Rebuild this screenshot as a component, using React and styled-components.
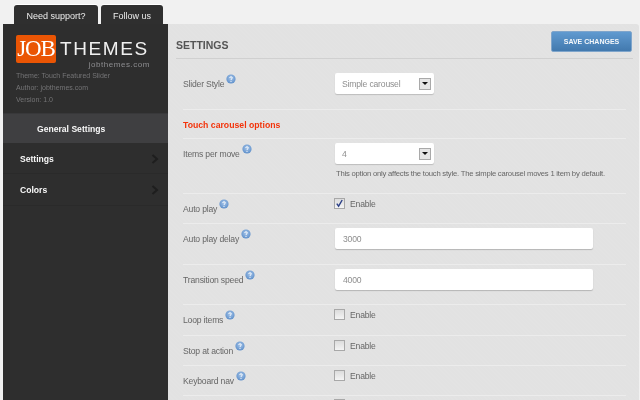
import styled, { createGlobalStyle } from 'styled-components';

const GlobalStyle = createGlobalStyle`
  html, body {
    margin: 0;
    height: 100%;
    overflow: hidden;
    background: #f1f1f1;
    font-family: 'Liberation Sans', Arial, sans-serif;
  }
`;

const Page = styled.div`
  height: 400px;
  padding: 5px 1px 0 3px;
  box-sizing: border-box;
  overflow: hidden;
  filter: blur(0.3px);
`;

const Tabs = styled.div`
  display: flex;
  column-gap: 3px;
  height: 19px;
  margin-left: 11px;
`;

const Tab = styled.div`
  width: ${props => props.$width}px;
  display: flex;
  align-items: center;
  justify-content: center;
  padding-top: 2px;
  box-sizing: border-box;
  background: #2f2f2f;
  border-radius: 3px 3px 0 0;
  box-shadow: 0 -1px 0 #fff;
  color: #ececec;
  font-size: 9px;
`;

const Panel = styled.div`
  display: flex;
  height: 376px;
  background-color: #e2e2e2;
  background-image: repeating-linear-gradient(45deg, rgba(255, 255, 255, 0.035) 0 1px, transparent 1px 3px);
  border-radius: 0 3px 0 0;
`;

const Sidebar = styled.aside`
  width: 165px;
  flex: none;
  background: #2e2e2e;
`;

const Brand = styled.div`
  height: 89px;
  padding: 11px 0 0 13px;
  box-sizing: border-box;
`;

const Logo = styled.div`
  display: flex;
  column-gap: 4px;
  height: 35px;
`;

const LogoBox = styled.div`
  width: 40px;
  height: 28px;
  display: flex;
  align-items: center;
  justify-content: center;
  background: #ea5504;
  border-radius: 2px;
  color: #fff;
  font-family: 'Liberation Serif', serif;
  font-size: 23px;
  letter-spacing: -1.2px;
`;

const LogoWords = styled.div`
  width: 92px;
  text-align: right;
`;

const LogoTitle = styled.div`
  margin-top: 3px;
  color: #f0f0f0;
  font-size: 19px;
  line-height: 22px;
  letter-spacing: 1.6px;
  white-space: nowrap;
  text-align: left;
`;

const LogoSite = styled.div`
  color: #8d8d90;
  font-size: 8px;
  line-height: 9px;
  letter-spacing: 0.55px;
  padding-right: 2px;
`;

const MetaLine = styled.div`
  color: #747476;
  font-size: 7px;
  line-height: 12px;
`;

const NavItem = styled.div`
  height: ${props => props.$height}px;
  display: flex;
  align-items: center;
  justify-content: space-between;
  padding: ${props => (props.$active ? '2px 0 0 34px' : '0 9px 0 17px')};
  box-sizing: border-box;
  background: ${props => (props.$active ? '#3f3f41' : 'transparent')};
  border-top: 1px solid ${props => (props.$active ? '#38383a' : 'transparent')};
  border-bottom: 1px solid ${props => (props.$active ? 'transparent' : '#2a2a2a')};
  color: #f8f8f8;
  font-size: 8.6px;
  font-weight: bold;
`;

const Chevron = () => (
  <svg width='8' height='10' viewBox='0 0 8 10'>
    <path d='M1.5 1 L6 5 L1.5 9' fill='none' stroke='#1e1e1e' strokeWidth='2' />
  </svg>
);

const Content = styled.main`
  flex: 1;
  padding: 7px 6px 0 8px;
  min-width: 0;
`;

const Header = styled.header`
  height: 27px;
  display: flex;
  align-items: flex-start;
  justify-content: space-between;
  padding-right: 1px;
  border-bottom: 1px solid #d0d0d0;
`;

const Title = styled.h2`
  margin: 8px 0 0;
  color: #555;
  font-size: 10.5px;
  font-weight: bold;
`;

const SaveButton = styled.button`
  width: 81px;
  height: 21px;
  padding: 0;
  border: 1px solid #7fa5cb;
  border-radius: 2px;
  background: linear-gradient(#609ad0, #4279ae);
  color: #f4f7fa;
  font-family: inherit;
  font-size: 7px;
  font-weight: bold;
`;

const Form = styled.div`
  padding: 0 7px;
`;

const Row = styled.div`
  height: ${props => props.$height}px;
  display: grid;
  grid-template-columns: 152px 1fr;
  align-items: start;
  padding-top: ${props => props.$top || 4}px;
  box-sizing: border-box;
  border-bottom: 1px solid #ececec;
`;

const SectionTitle = styled.div`
  height: 29px;
  padding-top: 10px;
  box-sizing: border-box;
  border-bottom: 1px solid #ececec;
  color: #f3330a;
  font-size: 8.7px;
  font-weight: bold;
`;

const Label = styled.div`
  display: flex;
  align-items: flex-start;
  column-gap: 2px;
  padding-top: 1px;
  color: #666;
  font-size: 8.6px;
  letter-spacing: -0.18px;
`;

const LabelText = styled.span`
  margin-top: 4px;
  line-height: 12px;
`;

const HelpIcon = () => (
  <svg width='10' height='10' viewBox='0 0 10 10'>
    <defs>
      <radialGradient id='help' cx='50%' cy='40%' r='60%'>
        <stop offset='0%' stopColor='#a7c6ea' />
        <stop offset='100%' stopColor='#5e8fca' />
      </radialGradient>
    </defs>
    <circle cx='5' cy='5' r='4.6' fill='url(#help)' />
    <path d='M3.7 3.9 C3.8 2.4 6.3 2.4 6.3 3.9 C6.3 4.8 5 4.8 5 5.9' fill='none' stroke='#fff' strokeWidth='1' />
    <circle cx='5' cy='7.3' r='0.6' fill='#fff' />
  </svg>
);

const Select = styled.div`
  width: 99px;
  height: 21px;
  display: flex;
  align-items: center;
  justify-content: space-between;
  padding: 0 3px 0 7px;
  box-sizing: border-box;
  background: #fff;
  border-radius: 2px;
  box-shadow: 0 1px 1px #bdbdbd;
  color: #8e8e8e;
  font-size: 8.6px;
  letter-spacing: -0.18px;
`;

const SelectArrow = styled.span`
  width: 12px;
  height: 12px;
  display: flex;
  align-items: center;
  justify-content: center;
  box-sizing: border-box;
  background: #e6e6e6;
  border: 1px solid #a9a9a9;

  &::after {
    content: '';
    border-style: solid;
    border-width: 3px 3px 0;
    border-color: #111 transparent transparent;
  }
`;

const Note = styled.p`
  margin: 5px 0 0 1px;
  color: #666;
  font-size: 7.7px;
  letter-spacing: -0.23px;
  line-height: 10px;
  white-space: nowrap;
`;

const TextInput = styled.div`
  width: 258px;
  height: 21px;
  display: flex;
  align-items: center;
  padding-left: 8px;
  box-sizing: border-box;
  background: #fff;
  border-radius: 2px;
  box-shadow: 0 1px 1px #b5b5b5;
  color: #8e8e8e;
  font-size: 8.6px;
  letter-spacing: -0.18px;
`;

const CheckRow = styled.div`
  display: flex;
  align-items: center;
  column-gap: 5px;
  margin-left: -1px;
  color: #666;
  font-size: 8.6px;
  letter-spacing: -0.18px;
`;

const CheckBox = styled.span`
  display: flex;
  width: 11px;
  height: 11px;
  align-items: center;
  justify-content: center;
  box-sizing: border-box;
  background: linear-gradient(#dcdcdc, #f4f4f4);
  border: 1px solid #a8a8a8;
`;

const CheckMark = () => (
  <svg width='9' height='9' viewBox='0 0 9 9'>
    <path d='M1.8 4.6 L3.6 7.2 L7.2 1' fill='none' stroke='#2b3f86' strokeWidth='1.4' />
  </svg>
);

const Field = ({ label, height, top, children }) => (
  <Row $height={height} $top={top}>
    <Label>
      <LabelText>{label}</LabelText>
      <HelpIcon />
    </Label>
    <div>{children}</div>
  </Row>
);

const Check = ({ checked }) => (
  <CheckRow>
    <CheckBox>{checked && <CheckMark />}</CheckBox>
    Enable
  </CheckRow>
);

const App = () => (
  <Page>
    <GlobalStyle />
    <Tabs>
      <Tab $width={84}>Need support?</Tab>
      <Tab $width={62}>Follow us</Tab>
    </Tabs>
    <Panel>
      <Sidebar>
        <Brand>
          <Logo>
            <LogoBox>JOB</LogoBox>
            <LogoWords>
              <LogoTitle>THEMES</LogoTitle>
              <LogoSite>jobthemes.com</LogoSite>
            </LogoWords>
          </Logo>
          <MetaLine>Theme: Touch Featured Slider</MetaLine>
          <MetaLine>Author: jobthemes.com</MetaLine>
          <MetaLine>Version: 1.0</MetaLine>
        </Brand>
        <nav>
          <NavItem $active $height={30}>General Settings</NavItem>
          <NavItem $height={31}>Settings<Chevron /></NavItem>
          <NavItem $height={32}>Colors<Chevron /></NavItem>
        </nav>
      </Sidebar>
      <Content>
        <Header>
          <Title>SETTINGS</Title>
          <SaveButton>SAVE CHANGES</SaveButton>
        </Header>
        <Form>
          <Field label='Slider Style' height={51} top={14}>
            <Select>Simple carousel<SelectArrow /></Select>
          </Field>
          <SectionTitle>Touch carousel options</SectionTitle>
          <Field label='Items per move' height={55}>
            <Select>4<SelectArrow /></Select>
            <Note>This option only affects the touch style. The simple carousel moves 1 item by default.</Note>
          </Field>
          <Field label='Auto play' height={30}><Check checked /></Field>
          <Field label='Auto play delay' height={41}><TextInput>3000</TextInput></Field>
          <Field label='Transition speed' height={40}><TextInput>4000</TextInput></Field>
          <Field label='Loop items' height={31}><Check /></Field>
          <Field label='Stop at action' height={30}><Check /></Field>
          <Field label='Keyboard nav' height={30}><Check /></Field>
          <Row $height={30} $top={3}>
            <span />
            <CheckRow><CheckBox /></CheckRow>
          </Row>
        </Form>
      </Content>
    </Panel>
  </Page>
);

export default App;
